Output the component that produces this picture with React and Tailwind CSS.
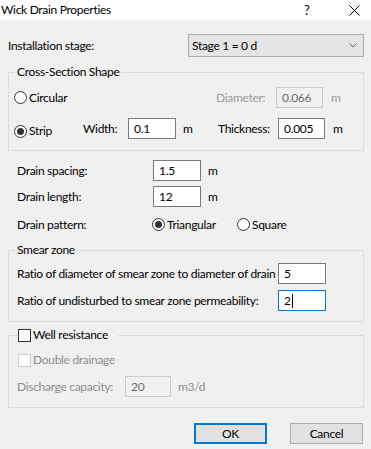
import React from "react";

const font = { fontFamily: 'Lato, "Liberation Sans", Arial, sans-serif' };

function Radio({ checked, className = "" }) {
  return (
    <span
      className={
        "flex items-center justify-center w-[13px] h-[13px] rounded-full border border-[#333333] bg-white shrink-0 " +
        className
      }
    >
      {checked && <span className="w-[7px] h-[7px] rounded-full bg-[#333333]" />}
    </span>
  );
}

function Check({ disabled }) {
  return (
    <span
      className={
        "w-[13px] h-[13px] border bg-white shrink-0 " +
        (disabled ? "border-[#cccccc]" : "border-[#333333]")
      }
    />
  );
}

function Input({ value, w = "w-[48px]", focused, disabled }) {
  let cls = "border-[#7a7a7a] bg-white text-black";
  if (focused) cls = "border-[#0078d7] bg-white text-black";
  if (disabled) cls = "border-[#cccccc] bg-[#f0f0f0] text-[#6d6d6d]";
  return (
    <div className={"h-[21px] border flex items-center pl-[5px] shrink-0 " + w + " " + cls}>
      {value}
      {focused && <span className="w-px h-[14px] bg-black ml-px" />}
    </div>
  );
}

export default function App() {
  return (
    <div
      className="w-[371px] h-[449px] bg-[#f0f0f0] text-[12px] leading-[16px] tracking-[-0.3px] text-black overflow-hidden whitespace-nowrap"
      style={font}
    >
      <div className="h-[20px] bg-white flex items-center pl-[1px]">
        <span className="flex-1">Wick Drain Properties</span>
        <span className="w-[12px] text-[13px] mr-[33px]">?</span>
        <svg width="11" height="11" viewBox="0 0 11 11" className="mr-[11px]">
          <path d="M0.5 0.5 L10.5 10.5 M10.5 0.5 L0.5 10.5" stroke="#000" strokeWidth="1" />
        </svg>
      </div>

      <div className="px-[8px] pr-[7px]">
        <div className="mt-[14px] h-[23px] flex items-center">
          <span className="w-[180px]">Installation stage:</span>
          <div className="flex-1 h-[23px] border border-[#acacac] bg-[#e5e5e5] flex items-center pl-[3px] pr-[6px]">
            <span className="flex-1">Stage 1 = 0 d</span>
            <svg width="8" height="5" viewBox="0 0 8 5">
              <path d="M0.5 0.5 L4 4 L7.5 0.5" stroke="#606060" fill="none" strokeWidth="1" />
            </svg>
          </div>
        </div>

        <fieldset className="mt-[7px] border border-[#dcdcdc] px-[5px] pb-[11px]">
          <legend className="ml-[1px] px-[2px] leading-[16px]">Cross-Section Shape</legend>
          <div className="mt-[7px] h-[21px] flex items-center">
            <Radio />
            <span className="ml-[2px] w-[187px]">Circular</span>
            <span className="w-[60px] text-[#9a9a9a]">Diameter:</span>
            <Input value="0.066" w="w-[47px]" disabled />
            <span className="ml-[8px] text-[#9a9a9a]">m</span>
          </div>
          <div className="mt-[10px] h-[21px] flex items-center">
            <Radio checked className="mt-[5px]" />
            <span className="ml-[2px] w-[54px] pt-[5px]">Strip</span>
            <span className="w-[45px]">Width:</span>
            <Input value="0.1" />
            <span className="ml-[7px] w-[35px]">m</span>
            <span className="w-[60px]">Thickness:</span>
            <Input value="0.005" w="w-[47px]" />
            <span className="ml-[8px]">m</span>
          </div>
        </fieldset>

        <div className="pl-[9px]">
          <div className="mt-[9px] h-[21px] flex items-center">
            <span className="w-[136px]">Drain spacing:</span>
            <Input value="1.5" />
            <span className="ml-[7px]">m</span>
          </div>
          <div className="mt-[5px] h-[21px] flex items-center">
            <span className="w-[136px]">Drain length:</span>
            <Input value="12" />
            <span className="ml-[7px]">m</span>
          </div>
          <div className="mt-[7px] h-[21px] flex items-center">
            <span className="w-[135px]">Drain pattern:</span>
            <Radio checked />
            <span className="ml-[2px] w-[70px]">Triangular</span>
            <Radio />
            <span className="ml-[2px]">Square</span>
          </div>
        </div>

        <fieldset className="mt-[7px] border border-[#dcdcdc] px-[8px] pb-[10px]">
          <legend className="-ml-[2px] px-[2px] leading-[16px]">Smear zone</legend>
          <div className="mt-[5px] h-[21px] flex items-center">
            <span className="w-[261px]">Ratio of diameter of smear zone to diameter of drain</span>
            <Input value="5" />
          </div>
          <div className="mt-[6px] h-[21px] flex items-center">
            <span className="w-[261px]">Ratio of undisturbed to smear zone permeability:</span>
            <Input value="2" focused />
          </div>
        </fieldset>

        <fieldset className="mt-[5px] border border-[#dcdcdc] px-[8px] pb-[10px]">
          <legend className="ml-[1px] pr-[10px] leading-[16px] flex items-center">
            <Check />
            <span className="ml-[2px]">Well resistance</span>
          </legend>
          <div className="mt-[9px] h-[16px] flex items-center pl-[1px]">
            <Check disabled />
            <span className="ml-[2px] text-[#8d8d8d]">Double drainage</span>
          </div>
          <div className="mt-[8px] h-[21px] flex items-center">
            <span className="w-[108px] text-[#8d8d8d]">Discharge capacity:</span>
            <Input value="20" w="w-[46px]" disabled />
            <span className="ml-[7px] text-[#8d8d8d]">m3/d</span>
          </div>
        </fieldset>

        <div className="mt-[15px] flex justify-end gap-[23px] pr-[1px]">
          <button className="w-[73px] h-[21px] border-2 border-[#0078d7] bg-[#e1e1e1] flex items-center justify-center">
            OK
          </button>
          <button className="w-[73px] h-[21px] border border-[#adadad] bg-[#e1e1e1] flex items-center justify-center">
            Cancel
          </button>
        </div>
      </div>
    </div>
  );
}
